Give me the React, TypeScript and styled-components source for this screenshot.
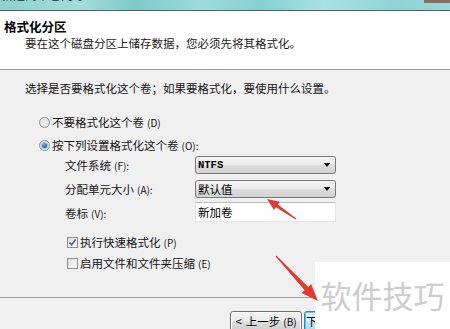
import React from "react";
import styled, { createGlobalStyle } from "styled-components";

const GlobalStyle = createGlobalStyle`
  html, body { margin: 0; padding: 0; background: #f0f0f0; }
  body { font-family: "Noto Sans CJK SC", "Noto Sans", sans-serif; }
`;

const Window = styled.div`
  position: relative;
  width: 450px;
  height: 329px;
  overflow: hidden;
  display: flex;
  flex-direction: column;
  background: #f0f0f0;
  color: #151515;
  font-size: 11.5px;
`;

const TitleBar = styled.div`
  flex: none;
  height: 10px;
  display: flex;
  align-items: flex-end;
  justify-content: space-between;
  overflow: hidden;
  background: linear-gradient(
    90deg,
    #8fd2d0 0%,
    #a3dcda 18%,
    #7fcacb 30%,
    #9ddbdb 45%,
    #86d0d2 58%,
    #a9e2e2 72%,
    #8fd4d6 88%,
    #98d8d8 100%
  );
  border-bottom: 1px solid #4b6463;
`;

const TitleText = styled.div`
  flex: none;
  height: 23px;
  line-height: 16px;
  padding-left: 1px;
  font-size: 12px;
  color: #24302f;
`;

const CloseEdge = styled.div`
  align-self: flex-start;
  flex: none;
  width: 26px;
  height: 3px;
  background: #8c6c60;
`;

const Header = styled.div`
  flex: none;
  box-sizing: border-box;
  height: 59px;
  padding: 8px 0 0 4px;
  background: #fff;
  border-bottom: 1px solid #a0a0a0;
  display: flex;
  flex-direction: column;
  gap: 1px;
`;

const HeaderTitle = styled.div`
  font-size: 12.5px;
  line-height: 16px;
  font-weight: 700;
  color: #000;
`;

const HeaderSub = styled.div`
  padding-left: 21px;
  line-height: 14px;
  color: #1a1a1a;
`;

const Body = styled.div`
  flex: 1;
  display: flex;
  flex-direction: column;
  padding-left: 25px;
`;

const Instruction = styled.div`
  margin-top: 11px;
  line-height: 14px;
`;

const Options = styled.div`
  margin-top: 20px;
  padding-left: 14px;
  display: flex;
  flex-direction: column;
  gap: 9px;
`;

const OptionRow = styled.div`
  display: flex;
  align-items: center;
  height: 14px;
  line-height: 14px;
  gap: 2px;
`;

const Radio = styled.span<{ $checked?: boolean }>`
  box-sizing: border-box;
  width: 11px;
  height: 11px;
  border-radius: 50%;
  border: 1px solid #8e9396;
  background: radial-gradient(circle at 50% 50%, #f4f4f4 0%, #e2e2e2 70%, #d2d2d2 100%);
  display: flex;
  align-items: center;
  justify-content: center;
  &::after {
    content: "";
    width: 5px;
    height: 5px;
    border-radius: 50%;
    display: ${(p) => (p.$checked ? "block" : "none")};
    background: radial-gradient(circle at 40% 35%, #7ab7f0 0%, #2a6bb8 55%, #173f7c 100%);
    box-shadow: 0 0 0 1px #a9c6e3;
  }
`;

const Key = styled.span`
  font-size: 10px;
  margin-left: 3px;
`;

const Form = styled.div`
  margin-top: 4px;
  padding-left: 40px;
  display: grid;
  grid-template-columns: 130px 141px;
  row-gap: 6px;
  align-items: center;
`;

const Label = styled.div`
  line-height: 14px;
`;

const Combo = styled.div`
  box-sizing: border-box;
  height: 18px;
  border: 1px solid #7a7a7a;
  border-radius: 3px;
  background: linear-gradient(#f4f4f4 0%, #ebebeb 48%, #dcdcdc 52%, #d4d4d4 100%);
  display: flex;
  align-items: center;
  justify-content: space-between;
  padding: 0 5px 0 2px;
`;

const ComboText = styled.span<{ $mono?: boolean }>`
  font-family: ${(p) => (p.$mono ? '"Liberation Mono", monospace' : '"Noto Sans CJK SC", sans-serif')};
  font-weight: ${(p) => (p.$mono ? 700 : 400)};
  font-size: ${(p) => (p.$mono ? "10.5px" : "11.5px")};
  line-height: 14px;
  color: #000;
`;

const Caret = styled.span`
  width: 0;
  height: 0;
  border-left: 3.5px solid transparent;
  border-right: 3.5px solid transparent;
  border-top: 4px solid #111;
`;

const TextInput = styled.div`
  box-sizing: border-box;
  height: 20px;
  margin-top: -2px;
  background: #fff;
  border: 1px solid #e2e6ea;
  border-top-color: #b9bdc2;
  padding-left: 2px;
  display: flex;
  align-items: center;
  line-height: 14px;
  color: #000;
`;

const Checks = styled.div`
  margin-top: 13px;
  padding-left: 42px;
  display: flex;
  flex-direction: column;
  gap: 7px;
`;

const CheckBox = styled.span`
  box-sizing: border-box;
  width: 11px;
  height: 11px;
  border: 1px solid #8f8f8f;
  background: linear-gradient(135deg, #dcdcdc 0%, #f2f2f2 60%, #fbfbfb 100%);
  display: flex;
  align-items: center;
  justify-content: center;
`;

const Footer = styled.div`
  flex: none;
  box-sizing: border-box;
  height: 32px;
  border-top: 1px solid #a0a0a0;
  padding: 13px 0 0 230px;
  display: flex;
  gap: 2px;
`;

const Button = styled.div<{ $focus?: boolean }>`
  flex: none;
  box-sizing: border-box;
  width: 72px;
  height: 21px;
  border: 1px solid ${(p) => (p.$focus ? "#3c7fb1" : "#707070")};
  border-radius: 3px;
  background: ${(p) =>
    p.$focus
      ? "linear-gradient(#eaf6fd 0%, #d9f0fc 48%, #bee6fd 52%, #a7d9f5 100%)"
      : "linear-gradient(#f2f2f2 0%, #ebebeb 48%, #dddddd 52%, #cfcfcf 100%)"};
  box-shadow: inset 0 0 0 1px ${(p) => (p.$focus ? "#48d3f5" : "#fcfcfc")};
  display: flex;
  align-items: flex-start;
  justify-content: ${(p) => (p.$focus ? "flex-start" : "center")};
  padding: 2px 0 0 ${(p) => (p.$focus ? "1px" : "0")};
  line-height: 14px;
  color: #000;
  gap: 4px;
`;

const Watermark = styled.div`
  position: absolute;
  left: 315px;
  top: 262px;
  right: 0;
  bottom: 0;
  background: #fff;
  display: flex;
  justify-content: center;
  padding-top: 15px;
  box-sizing: border-box;
  font-size: 31px;
  line-height: 36px;
  color: #cdcdcd;
`;

const ArrowLayer = styled.svg`
  position: absolute;
  left: 0;
  top: 0;
  pointer-events: none;
`;

function arrowPoints(
  tx: number,
  ty: number,
  px: number,
  py: number,
  head: number,
  headW: number,
  tailW: number,
  neckW: number
) {
  const dx = px - tx;
  const dy = py - ty;
  const L = Math.hypot(dx, dy);
  const ux = dx / L;
  const uy = dy / L;
  const nx = -uy;
  const ny = ux;
  const bx = px - ux * head;
  const by = py - uy * head;
  const pts = [
    [tx + (nx * tailW) / 2, ty + (ny * tailW) / 2],
    [bx + (nx * neckW) / 2, by + (ny * neckW) / 2],
    [bx + (nx * headW) / 2, by + (ny * headW) / 2],
    [px, py],
    [bx - (nx * headW) / 2, by - (ny * headW) / 2],
    [bx - (nx * neckW) / 2, by - (ny * neckW) / 2],
    [tx - (nx * tailW) / 2, ty - (ny * tailW) / 2],
  ];
  return pts.map((p) => p.map((v) => v.toFixed(1)).join(",")).join(" ");
}

const CheckMark = () => (
  <svg width="9" height="9" viewBox="0 0 9 9">
    <path d="M1.5 4.6 L3.6 6.8 L7.6 1.6" fill="none" stroke="#3b63b8" strokeWidth="1.6" strokeLinejoin="round" />
  </svg>
);

export default function App() {
  return (
    <>
      <GlobalStyle />
      <Window>
        <TitleBar>
          <TitleText>新建简单卷向导</TitleText>
          <CloseEdge />
        </TitleBar>
        <Header>
          <HeaderTitle>格式化分区</HeaderTitle>
          <HeaderSub>要在这个磁盘分区上储存数据，您必须先将其格式化。</HeaderSub>
        </Header>
        <Body>
          <Instruction>选择是否要格式化这个卷；如果要格式化，要使用什么设置。</Instruction>
          <Options>
            <OptionRow>
              <Radio />
              <span>
                不要格式化这个卷<Key>(D)</Key>
              </span>
            </OptionRow>
            <OptionRow>
              <Radio $checked />
              <span>
                按下列设置格式化这个卷<Key>(O):</Key>
              </span>
            </OptionRow>
          </Options>
          <Form>
            <Label>
              文件系统<Key>(F):</Key>
            </Label>
            <Combo>
              <ComboText $mono>NTFS</ComboText>
              <Caret />
            </Combo>
            <Label>
              分配单元大小<Key>(A):</Key>
            </Label>
            <Combo>
              <ComboText>默认值</ComboText>
              <Caret />
            </Combo>
            <Label>
              卷标<Key>(V):</Key>
            </Label>
            <TextInput>新加卷</TextInput>
          </Form>
          <Checks>
            <OptionRow>
              <CheckBox>
                <CheckMark />
              </CheckBox>
              <span>
                执行快速格式化<Key>(P)</Key>
              </span>
            </OptionRow>
            <OptionRow>
              <CheckBox />
              <span>
                启用文件和文件夹压缩<Key>(E)</Key>
              </span>
            </OptionRow>
          </Checks>
        </Body>
        <Footer>
          <Button>
            <span>&lt;</span>
            <span>
              上一步<Key>(B)</Key>
            </span>
          </Button>
          <Button $focus>
            <span>下</span>
          </Button>
        </Footer>
        <Watermark>软件技巧</Watermark>
        <ArrowLayer width="450" height="329" viewBox="0 0 450 329">
          <polygon points={arrowPoints(296, 219, 267, 199, 12, 10, 1.2, 3.5)} fill="#e33a2f" />
          <polygon points={arrowPoints(276, 256, 318, 301, 17, 13, 1.2, 5)} fill="#e33a2f" />
        </ArrowLayer>
      </Window>
    </>
  );
}
